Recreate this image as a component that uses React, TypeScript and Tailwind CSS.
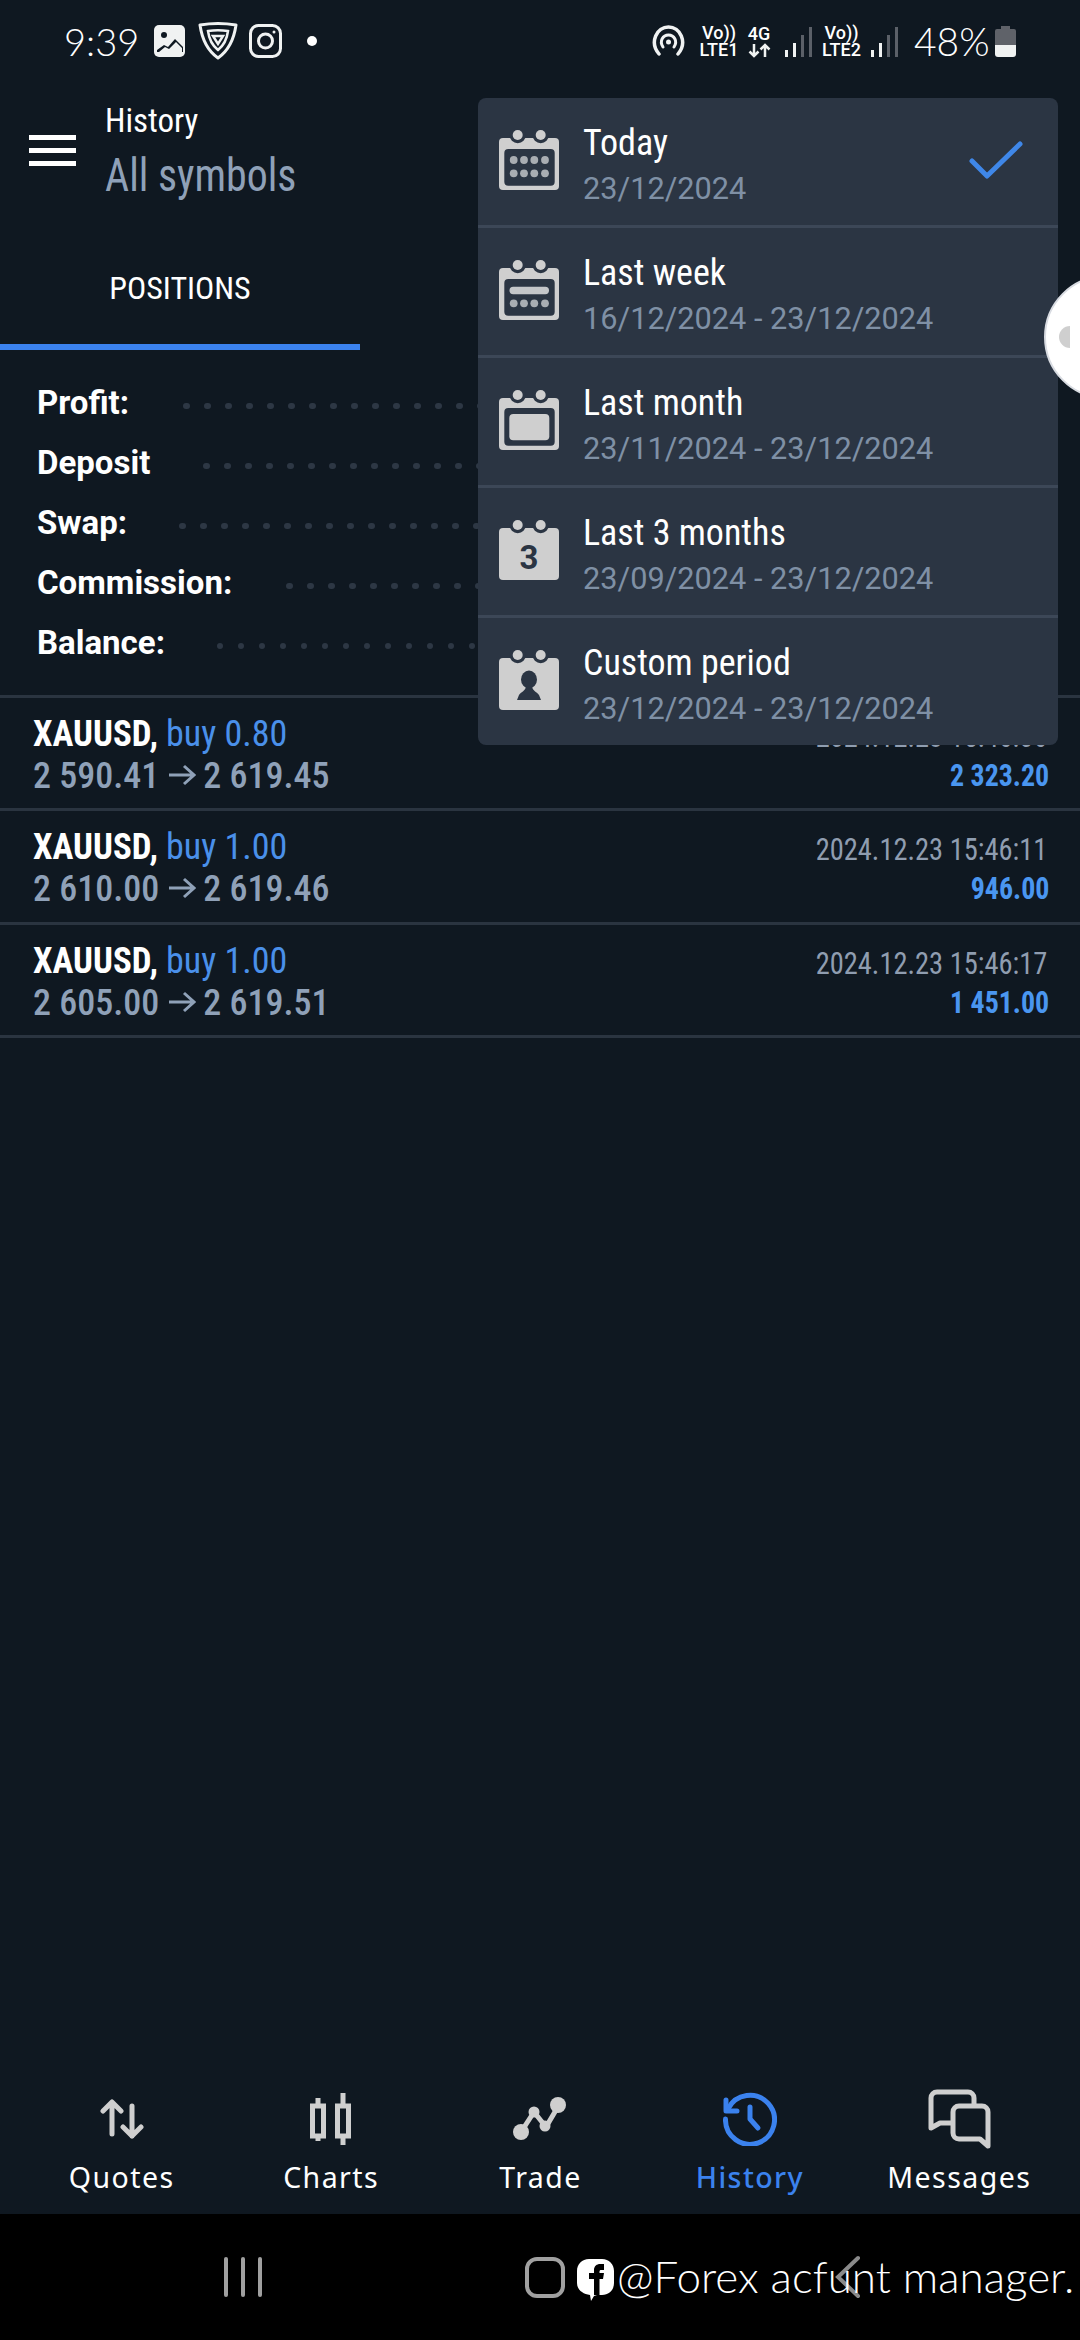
import React from 'react';

const cond = "font-['Roboto_Condensed','Liberation_Sans_Narrow',Roboto,sans-serif] [font-stretch:75%]";

const summary = [
    { label: 'Profit:', gap: 'ml-[54px]' },
    { label: 'Deposit', gap: 'ml-[53px]' },
    { label: 'Swap:', gap: 'ml-[52px]' },
    { label: 'Commission:', gap: 'ml-[54px]' },
    { label: 'Balance:', gap: 'ml-[52px]' },
];

const deals = [
    { lots: 'buy 0.80', prices: '2 590.41', close: '2 619.45', time: '2024.12.23 15:46:06', profit: '2 323.20' },
    { lots: 'buy 1.00', prices: '2 610.00', close: '2 619.46', time: '2024.12.23 15:46:11', profit: '946.00' },
    { lots: 'buy 1.00', prices: '2 605.00', close: '2 619.51', time: '2024.12.23 15:46:17', profit: '1 451.00' },
];

function CalendarBase({ children }: { children: React.ReactNode }) {
    return (
        <svg width="60" height="60" viewBox="0 0 60 60" className="shrink-0">
            <rect x="0" y="8" width="60" height="52" rx="4" fill="#cfcfcf" />
            <circle cx="18.7" cy="5" r="8.2" fill="#2b3543" />
            <circle cx="41.7" cy="5" r="8.2" fill="#2b3543" />
            <circle cx="18.7" cy="5" r="5" fill="#cfcfcf" />
            <circle cx="41.7" cy="5" r="5" fill="#cfcfcf" />
            {children}
        </svg>
    );
}

function Dots({ cy }: { cy: number }) {
    return (
        <>
            {[14.7, 25, 35.3, 46].map((cx) => (
                <circle key={cx} cx={cx} cy={cy} r="3.9" fill="#a9adb2" />
            ))}
        </>
    );
}

const menuItems = [
    {
        title: 'Today',
        range: '23/12/2024',
        icon: (
            <CalendarBase>
                <rect x="5.3" y="19" width="50.4" height="36.7" rx="4" fill="#2b3543" />
                <Dots cy={30} />
                <Dots cy={43.3} />
            </CalendarBase>
        ),
    },
    {
        title: 'Last week',
        range: '16/12/2024 - 23/12/2024',
        icon: (
            <CalendarBase>
                <rect x="5.3" y="19" width="50.4" height="36.7" rx="4" fill="#2b3543" />
                <rect x="10.5" y="26.7" width="39.5" height="7.5" rx="3.7" fill="#c4c6c9" />
                <Dots cy={43.3} />
            </CalendarBase>
        ),
    },
    {
        title: 'Last month',
        range: '23/11/2024 - 23/12/2024',
        icon: (
            <CalendarBase>
                <rect x="5.3" y="18" width="50.4" height="37.7" rx="4" fill="#2b3543" />
                <rect x="10.3" y="24" width="40" height="26.3" rx="4" fill="#cfcfcf" />
            </CalendarBase>
        ),
    },
    {
        title: 'Last 3 months',
        range: '23/09/2024 - 23/12/2024',
        icon: (
            <CalendarBase>
                <text x="30" y="49" textAnchor="middle" fontSize="33" fontWeight="700" fill="#2b3543" fontFamily="Roboto, sans-serif">
                    3
                </text>
            </CalendarBase>
        ),
    },
    {
        title: 'Custom period',
        range: '23/12/2024 - 23/12/2024',
        icon: (
            <CalendarBase>
                <ellipse cx="30" cy="29.5" rx="8" ry="9" fill="#2b3543" />
                <path d="M18 50l2-5c2-3 6-4 7-8h6c1 4 5 5 7 8l2 5z" fill="#2b3543" />
            </CalendarBase>
        ),
    },
];

function SignalBars({ className }: { className: string }) {
    return (
        <svg width="28" height="31" viewBox="0 0 28 31" className={className}>
            <rect x="0" y="24" width="3" height="7" fill="#f0f2f2" />
            <rect x="8" y="17" width="3" height="14" fill="#f0f2f2" />
            <rect x="16" y="9" width="3" height="22" fill="#5b6068" />
            <rect x="24" y="1" width="3" height="30" fill="#5b6068" />
        </svg>
    );
}

function StatusBar() {
    return (
        <div className="h-[87px] shrink-0 flex items-center pb-[5px] text-white relative">
            <span className="ml-[64px] w-[76px] text-[38px] font-light font-['Lato',sans-serif] leading-none">9:39</span>
            <svg width="32" height="32" viewBox="0 0 32 32" className="ml-[14px]">
                <rect width="31" height="32" rx="5" fill="#f0f2f2" />
                <circle cx="10" cy="10" r="3" fill="#0f1821" />
                <path d="M3 25l7-5 4 2 7-8 8 8v5H3z" fill="#0f1821" />
                <path d="M5 27l6-5 4 2 7-7 6 6v4z" fill="#f0f2f2" />
            </svg>
            <svg width="40" height="38" viewBox="0 0 40 38" fill="none" stroke="#f0f2f2" strokeWidth="3" className="ml-[12px]">
                <path d="M2 3c12-2 24-2 36 0-2 14-8 26-18 33C10 29 4 17 2 3z" strokeLinejoin="round" />
                <path d="M10 9c7-1 13-1 20 0-1 8-5 15-10 19-5-4-9-11-10-19z" strokeWidth="2.500" />
                <path d="M15 14h10l-5 8z" strokeWidth="2.500" />
            </svg>
            <svg width="33" height="34" viewBox="0 0 33 34" fill="none" stroke="#f0f2f2" strokeWidth="3" className="ml-[11px]">
                <rect x="1.500" y="1.500" width="30" height="31" rx="8" />
                <circle cx="16.500" cy="17" r="7" />
                <circle cx="25" cy="8" r="1.500" fill="#f0f2f2" stroke="none" />
            </svg>
            <span className="ml-[25px] w-[10px] h-[10px] rounded-full bg-white" />
            <div className="flex-1" />
            <svg width="35" height="32" viewBox="0 0 35 32" fill="none" stroke="#f0f2f2" strokeWidth="3.500" strokeLinecap="round">
                <path d="M8 29C-2 17 6 2 17.500 2S37 17 27 29" />
                <path d="M12 22c-4-6 0-12 5.500-12S27 16 23 22" strokeWidth="3" />
                <circle cx="17.500" cy="17" r="2.500" fill="#f0f2f2" stroke="none" />
            </svg>
            <div className="ml-[13px] w-[40px] flex flex-col items-center text-[18px] leading-[17px] font-medium font-['Roboto',sans-serif]">
                <span>Vo))</span>
                <span>LTE1</span>
            </div>
            <div className="ml-[8px] w-[24px] flex flex-col items-center text-[18px] leading-[17px] font-medium font-['Roboto',sans-serif]">
                <span>4G</span>
                <svg width="23" height="15" viewBox="0 0 23 15" fill="none" stroke="#f0f2f2" strokeWidth="2.500" className="mt-[1px]">
                    <path d="M6 1v12M1.500 8.500L6 13l4.500-4.500" />
                    <path d="M17 14V2M12.500 6.500L17 2l4.500 4.500" />
                </svg>
            </div>
            <SignalBars className="ml-[14px]" />
            <div className="ml-[8px] w-[41px] flex flex-col items-center text-[18px] leading-[17px] font-medium font-['Roboto',sans-serif]">
                <span>Vo))</span>
                <span>LTE2</span>
            </div>
            <SignalBars className="ml-[9px]" />
            <span className="ml-[15px] w-[76px] text-[39px] font-light font-['Lato',sans-serif] leading-none">48%</span>
            <svg width="21" height="31" viewBox="0 0 21 31" className="ml-[5px] mr-[64px]">
                <path d="M6 0h9v3h4a2 2 0 0 1 2 2v9H0V5a2 2 0 0 1 2-2h4z" fill="#5f6269" />
                <path d="M0 19h21v9a3 3 0 0 1-3 3H3a3 3 0 0 1-3-3z" fill="#f0f2f2" />
                <rect y="14" width="21" height="5" fill="#5f6269" />
            </svg>
        </div>
    );
}

function Toolbar() {
    return (
        <div className="h-[113px] shrink-0 flex items-start">
            <div className="ml-[29px] mt-[48px] w-[47px] flex flex-col gap-[8px]">
                <span className="h-[5px] bg-white" />
                <span className="h-[5px] bg-white" />
                <span className="h-[5px] bg-white" />
            </div>
            <div className={`ml-[29px] mt-[14px] flex flex-col ${cond}`}>
                <span className="text-white text-[33px] leading-[40px]">History</span>
                <span className="mt-[7px] origin-left scale-x-[.91] text-[#8fa1b8] text-[46px] leading-[54px]">All symbols</span>
            </div>
        </div>
    );
}

function Tabs() {
    return (
        <div className="h-[150px] shrink-0 flex flex-col">
            <div className={`w-[360px] h-[144px] pt-[32px] flex items-center justify-center text-white text-[32px] ${cond}`}>POSITIONS</div>
            <div className="w-[360px] h-[6px] bg-[#3b82ee]" />
        </div>
    );
}

function Summary() {
    return (
        <div className="h-[348px] shrink-0 border-b-[3px] border-[#2a3440] pt-[23px]">
            {summary.map((row) => (
                <div key={row.label} className="h-[60px] flex items-center pl-[37px] pr-[40px]">
                    <span className="text-white text-[33px] font-bold font-['Roboto',sans-serif] shrink-0">{row.label}</span>
                    <div className={`${row.gap} flex-1 overflow-hidden flex gap-[14.500px] mt-[6px]`}>
                        {Array.from({ length: 42 }).map((_, i) => (
                            <span key={i} className="w-[6.500px] h-[6.500px] rounded-full bg-[#2d3744] shrink-0" />
                        ))}
                    </div>
                </div>
            ))}
        </div>
    );
}

function DealRow({ deal }: { deal: (typeof deals)[number] }) {
    return (
        <div className={`h-[113.330px] shrink-0 border-b-[3px] border-[#2a3440] flex justify-between px-[33px] ${cond}`}>
            <div className="pt-[15px] text-[36px] leading-[42px]">
                <div className="flex">
                    <span className="w-[124px] origin-left scale-x-[.97] text-white font-bold whitespace-nowrap">XAUUSD,</span>
                    <span className="ml-[9px] text-[#4a90ea]">{deal.lots}</span>
                </div>
                <div className="flex items-center text-[#8fa1b8] font-medium">
                    {deal.prices}
                    <svg width="27" height="22" viewBox="0 0 27 22" fill="none" stroke="#8fa1b8" strokeWidth="3" className="ml-[10px] mr-[7px] -mt-[2px]">
                        <path d="M0 11h25M15 2l10 9-10 9" />
                    </svg>
                    {deal.close}
                </div>
            </div>
            <div className="pt-[18px] flex flex-col items-end leading-[40px]">
                <span className="origin-right scale-x-[.89] text-[#8f9db0] text-[32px]">{deal.time}</span>
                <span className="origin-right scale-x-[.9] -mr-[2px] text-[#4a96f0] text-[31px] font-bold">{deal.profit}</span>
            </div>
        </div>
    );
}

function PeriodMenu() {
    return (
        <div className="absolute left-[478px] top-[98px] w-[580px] rounded-[8px] bg-[#2b3543] overflow-hidden">
            {menuItems.map((item, i) => (
                <div
                    key={item.title}
                    className={`flex items-center pl-[21px] pb-[3px] ${i < 4 ? 'h-[130px] border-b-[3px] border-[#3c4757]' : 'h-[127px]'}`}
                >
                    {item.icon}
                    <div className="ml-[24px] mt-[10px] flex-1">
                        <div className={`text-white text-[36px] leading-[44px] ${cond}`}>{item.title}</div>
                        <div className="mt-[4px] text-[#7f90a5] text-[30.700px] leading-[40px] font-['Roboto',sans-serif]">{item.range}</div>
                    </div>
                    {i === 0 && (
                        <svg width="54" height="38" viewBox="0 0 54 38" fill="none" stroke="#3f87e8" strokeWidth="5" strokeLinecap="round" strokeLinejoin="round" className="mr-[35px]">
                            <path d="M3 20l15 15L51 3" />
                        </svg>
                    )}
                </div>
            ))}
        </div>
    );
}

function BottomNav() {
    const tint = '#cfcfcf';
    const items = [
        {
            label: 'Quotes',
            icon: (
                <svg width="44" height="40" viewBox="0 0 44 40" fill="none" stroke={tint} strokeWidth="5" strokeLinecap="round" strokeLinejoin="round">
                    <path d="M12 35V4M3 12l9-9 9 9" />
                    <path d="M32 7v30M23 28l9 9 9-9" />
                </svg>
            ),
        },
        {
            label: 'Charts',
            icon: (
                <svg width="42" height="52" viewBox="0 0 42 52" fill="none" stroke={tint} strokeWidth="5">
                    <rect x="2.500" y="13" width="11" height="30" />
                    <rect x="27.500" y="13" width="11" height="30" />
                    <path d="M8 5v8M8 43v5M33 0v13M33 43v9" />
                </svg>
            ),
        },
        {
            label: 'Trade',
            icon: (
                <svg width="54" height="44" viewBox="0 0 54 44" fill={tint} stroke="none">
                    <path d="M8 35L21 15l12 15L46 8" fill="none" stroke={tint} strokeWidth="5" strokeLinejoin="round" />
                    <circle cx="8" cy="35" r="8" />
                    <circle cx="21" cy="15" r="5.500" />
                    <circle cx="32" cy="29" r="5.500" />
                    <circle cx="45" cy="8" r="8" />
                </svg>
            ),
        },
        {
            label: 'History',
            active: true,
            icon: (
                <svg width="54" height="54" viewBox="0 0 54 54" fill="none" stroke="#3b82ee" strokeWidth="5" strokeLinecap="round" strokeLinejoin="round">
                    <path d="M5 17A24.500 24.500 0 1 1 2.500 27" />
                    <path d="M3 8v11h11" />
                    <path d="M27 15v12l8 9" />
                </svg>
            ),
        },
        {
            label: 'Messages',
            icon: (
                <svg width="63" height="60" viewBox="0 0 63 60" fill="none" stroke={tint} strokeWidth="5" strokeLinejoin="round">
                    <path d="M46 17V9a6 6 0 0 0-6-6H9a6 6 0 0 0-6 6v30l9-5h13" />
                    <path d="M31 17h23a6 6 0 0 1 6 6v34l-8-7H31a6 6 0 0 1-6-6V23a6 6 0 0 1 6-6z" />
                </svg>
            ),
        },
    ];
    return (
        <div className="h-[137px] shrink-0 grid grid-cols-5 pl-[17px] pr-[16px]">
            {items.map((item) => (
                <div key={item.label} className="flex flex-col items-center pt-[8px]">
                    <div className="h-[67px] flex items-center justify-center">{item.icon}</div>
                    <span
                        className={`mt-[6px] text-[28.500px] leading-[38px] tracking-[0.05em] font-['Noto_Sans',sans-serif] ${
                            item.active ? 'text-[#3b82ee] font-medium' : 'text-white'
                        }`}
                    >
                        {item.label}
                    </span>
                </div>
            ))}
        </div>
    );
}

function SystemNav() {
    return (
        <div className="h-[126px] shrink-0 bg-black relative flex items-center">
            <div className="ml-[224px] flex gap-[13px]">
                <span className="w-[4px] h-[40px] rounded-full bg-[#a0a0a0]" />
                <span className="w-[4px] h-[40px] rounded-full bg-[#a0a0a0]" />
                <span className="w-[4px] h-[40px] rounded-full bg-[#a0a0a0]" />
            </div>
            <span className="ml-[263px] w-[40px] h-[41px] rounded-[12px] border-[4px] border-[#a0a0a0]" />
            <svg width="26" height="44" viewBox="0 0 26 44" fill="none" stroke="#8a8a8a" strokeWidth="4" strokeLinecap="round" className="ml-[270px]">
                <path d="M23 3L3 22l20 19" />
            </svg>
            {/* watermark laid over the nav buttons */}
            <div className="absolute left-[577px] top-[44px] flex items-center text-white">
                <svg width="37" height="44" viewBox="0 0 37 44" className="shrink-0">
                    <path d="M12 1h13c7 0 12 5 12 12v12c0 7-5 12-12 12h-5l-3 1-3 5-1-6C6 36 0 32 0 25V13C0 6 5 1 12 1z" fill="#fff" />
                    <path d="M17 37V21h-5v-6h5v-3c0-4 3-6 6-6h4v6h-3c-1 0-1.500.6-1.500 1.500V15h4.500l-1 6h-3.500v16z" fill="#000" />
                </svg>
                <span className="ml-[3px] -mt-[8px] text-[44px] leading-[48px] font-light font-['Lato',sans-serif] whitespace-nowrap">@Forex acfunt manager.</span>
            </div>
        </div>
    );
}

export default function App() {
    return (
        <div className="relative w-[1080px] h-[2340px] overflow-hidden bg-[#0f1821] flex flex-col">
            <StatusBar />
            <Toolbar />
            <Tabs />
            <Summary />
            {deals.map((deal) => (
                <DealRow key={deal.time} deal={deal} />
            ))}
            <div className="flex-1" />
            <BottomNav />
            <SystemNav />
            <PeriodMenu />
            {/* floating assistive handle at the screen edge */}
            <div className="absolute left-[1044px] top-[275px] w-[124px] h-[124px] rounded-full bg-white border-[2px] border-[#d9dce2] flex items-center">
                <span className="ml-[13px] w-[11px] h-[22px] bg-[#cfcfcf] rounded-l-full" />
            </div>
        </div>
    );
}
